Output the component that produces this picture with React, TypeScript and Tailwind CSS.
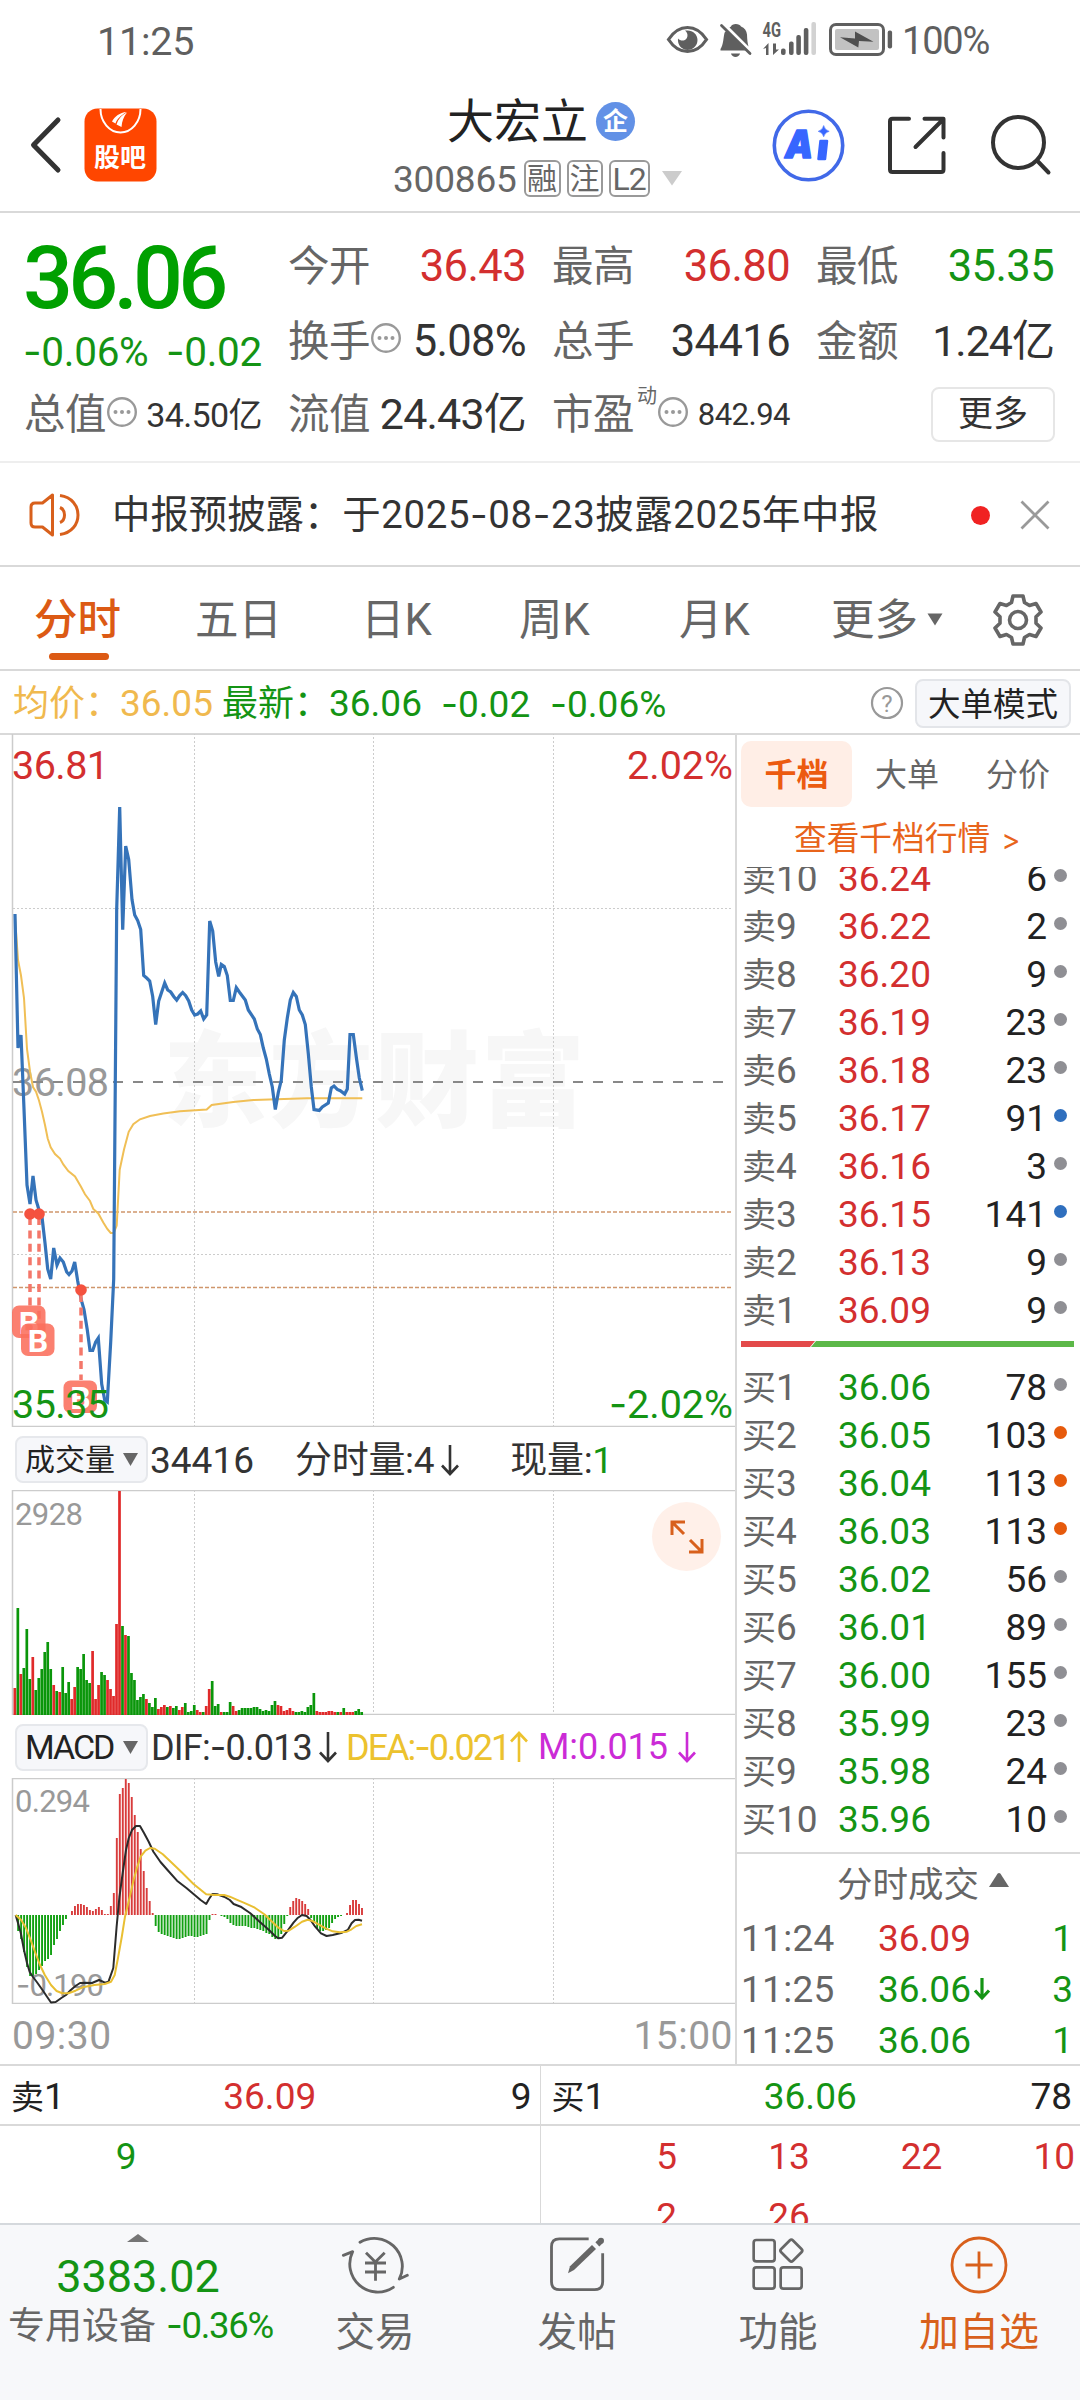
import { Fragment } from "react";
import clsx from "clsx";

const RED = "text-[#d32f2f]";
const GREEN = "text-[#149414]";

type Level = { label: string; price: string; qty: string; dot?: string };

const asks: Level[] = [
    { label: "卖10", price: "36.24", qty: "6" },
    { label: "卖9", price: "36.22", qty: "2" },
    { label: "卖8", price: "36.20", qty: "9" },
    { label: "卖7", price: "36.19", qty: "23" },
    { label: "卖6", price: "36.18", qty: "23" },
    { label: "卖5", price: "36.17", qty: "91", dot: "bg-[#2f6fbe]" },
    { label: "卖4", price: "36.16", qty: "3" },
    { label: "卖3", price: "36.15", qty: "141", dot: "bg-[#2f6fbe]" },
    { label: "卖2", price: "36.13", qty: "9" },
    { label: "卖1", price: "36.09", qty: "9" },
];

const bids: Level[] = [
    { label: "买1", price: "36.06", qty: "78" },
    { label: "买2", price: "36.05", qty: "103", dot: "bg-[#e65a0c]" },
    { label: "买3", price: "36.04", qty: "113", dot: "bg-[#e65a0c]" },
    { label: "买4", price: "36.03", qty: "113", dot: "bg-[#e65a0c]" },
    { label: "买5", price: "36.02", qty: "56" },
    { label: "买6", price: "36.01", qty: "89" },
    { label: "买7", price: "36.00", qty: "155" },
    { label: "买8", price: "35.99", qty: "23" },
    { label: "买9", price: "35.98", qty: "24" },
    { label: "买10", price: "35.96", qty: "10" },
    { label: "买11", price: "35.95", qty: "19" },
];

const trades = [
    { time: "11:24", price: "36.09", qty: "1", up: true, arrow: false },
    { time: "11:25", price: "36.06", qty: "3", up: false, arrow: true },
    { time: "11:25", price: "36.06", qty: "1", up: false, arrow: false },
];

// one bar per minute, bar height in px, r = up / g = down
const volume =
    "r27 g107 r41 g47 g86 g36 r58 g25 g37 g46 g63 g73 g46 r30 g24 r23 g48 g22 g33 r16 r28 g48 g46 g61 g35 g32 r64 r16 r30 g43 g40 r35 r26 r19 r91 r224 g89 r80 g79 g42 g35 g15 g18 g21 r16 g12 g8 g17 r6 r8 r10 g8 r9 g7 g9 r5 r8 g12 g3 g4 g10 r5 r3 g3 r9 r26 g34 g9 g11 r3 g3 g3 g13 r9 r4 g5 g7 g7 g7 g7 g8 g8 g6 g4 g5 g4 g10 g14 r10 r9 r4 r5 r7 r4 g3 g3 g4 g3 g8 g10 g22 r4 r3 r3 r3 r4 r4 r3 g3 r3 g7 r3 r3 r3 g4 g6 g3".split(
        " "
    );

const macd = [
    0, -16, -24, -37, -52, -61, -61, -59, -55, -51, -46, -44, -40, -30, -24, -16, -10, -4, 0, 4, 9, 11, 11, 10, 8, 5, 4,
    6, 8, 5, 1, 1, 9, 22, 77, 121, 127, 136, 132, 118, 100, 83, 66, 44, 27, 14, 2, -11, -17, -19, -20, -21, -22, -23,
    -24, -24, -23, -22, -21, -21, -22, -22, -21, -20, -19, -5, 1, 1, 0, -1, -2, -4, -8, -10, -11, -11, -11, -11, -12,
    -13, -13, -14, -15, -16, -18, -19, -22, -24, -23, -19, -9, -1, 8, 14, 17, 16, 14, 11, 6, -3, -8, -14, -16, -16,
    -15, -13, -8, -4, -2, -1, 0, 2, 10, 15, 15, 11, 7,
];

const priceLine =
    "15,914 18,1048 21,1035 24,1109 27,1185 30,1204 33,1176 36,1200 39,1210 42,1217 45,1243 47.7,1269 50.7,1279 53.7,1248 57,1265 60,1258 63.3,1262 66.7,1272 69,1274.6 72,1271 74.7,1262 77.7,1281 81,1299 84,1309.5 87.3,1330 90,1350.5 92.7,1350.5 95.7,1342 98.3,1338 101.7,1384 104.7,1400 107.3,1402 110.7,1342 113.7,1279 116.7,909 119.7,807 122.7,929.6 125.7,846 128.7,859.5 132,899.6 134.7,915 137.7,920.6 140.7,929.6 143.7,975.5 146.7,978 149.7,981 152.7,996.5 155.7,1024.6 158.7,1001 161.7,992 164.7,983 167.7,990 170.7,992 173.7,996.5 176.7,1000 179.7,995.6 182.7,992.5 185.7,995.6 188.7,1001 191.7,1010 194.7,1015 197.7,1014 200.7,1011 203.7,1019 206.7,1015 209.7,921 212.7,931 215.7,962 218.7,976.4 221.3,964.4 224.3,966.6 227.3,975.5 230.3,1000.5 233.3,1000.5 236.3,987.6 239.3,992 245.3,1000 248.3,1010 254.3,1019 257.3,1029 260.3,1034.5 263.3,1048 266.3,1059 269.3,1074 272.3,1087 275.3,1109.5 278.3,1092.5 281.3,1080 284.3,1040 287.3,1018 290.3,1000 293.3,992.5 296.3,996.5 299.3,1010 302.3,1015 305.3,1024.6 308.3,1053.7 311.3,1087 314,1109.5 319.3,1110.4 322.3,1107 328.3,1103 331.3,1088 334,1086 337.3,1089.4 340.3,1090.7 344.7,1094 347.3,1089 350,1034.5 353.3,1034.5 356.7,1060 359.3,1078 362.3,1090.7";

const avgLine =
    "15,917 18,960 21,975.5 24,998 27,1049 30,1071.5 33,1087 36,1091.6 39,1100.5 42,1111.7 45,1125 47.7,1138.5 50.7,1147.4 55,1154 60,1158.6 63.3,1164.4 68.3,1171 75,1176.4 81,1186.7 85,1194.3 90,1201 93.3,1209 98.3,1213.5 103.3,1222.4 107.3,1229 110.7,1233 113.7,1233 116.7,1225.5 119.7,1169.7 124,1149.6 128.7,1131.8 133.3,1124.2 140,1119.3 150,1116 163.3,1113.5 180,1111.3 206.7,1109.5 211.7,1105 233.3,1101.9 253.3,1100 306.7,1098.3 362.3,1098.3";

const difLine =
    "15.6,1915 18,1923 20.8,1933 24,1950 27,1963 29.7,1972 33,1977 36.8,1982 42.5,1990 47.2,1997 51,2002.5 55.7,2002 61.3,1998 66,1995 70.8,1990 75.5,1986 80,1983 85,1982.7 92,1983 99,1980 105,1982.7 108.5,1981.7 113.3,1968 116.6,1927 119.4,1897 122.7,1873 126,1850 128.8,1838 132,1830 136,1826 140,1826 144,1833 148.7,1841.7 153.4,1851.7 160.5,1862 167.5,1870 177,1880.7 186.4,1888 193.5,1894 200.6,1900 206.2,1904 209,1899 212.4,1894 217,1894.3 224,1896.7 229.8,1900 233.6,1904 240.7,1906.7 250,1913 259.6,1921.7 269,1930 275,1936 278.4,1938.3 282.2,1937.7 287,1931.7 293.5,1922.7 297.3,1918.3 302,1915 306.7,1916 310.5,1920 315.2,1926.7 321,1933.3 326.6,1936 332.7,1935 342,1932.7 347.8,1930 351.6,1923.3 355,1920 358.7,1919.7 362,1920.7";

const deaLine =
    "15.6,1915 21.2,1920 26,1928 30.7,1940 35.4,1953 40,1965 44.8,1975 51,1985 56.6,1991 62.3,1993.3 68.4,1993.3 75.5,1990.7 82.6,1987.3 94.4,1985 104.8,1984 111,1981.7 114.7,1975 118,1958 121.8,1936.7 125,1916.7 129.8,1896.7 133.6,1880 136.9,1868 140.6,1856.7 145.4,1850.7 150,1848 154.8,1848.7 162.8,1854.3 172.3,1863.3 181.7,1872.3 193.5,1884 206.2,1894.3 214.7,1895 224.2,1895 229.8,1896.7 236,1899.3 245.4,1903.3 254.8,1907.7 264.3,1914.3 273.7,1923.3 278.4,1927.7 284,1931 288.8,1930.7 295,1926.7 302,1921.7 307.7,1919.7 312.4,1921 318.5,1924.3 325.6,1928.3 332.7,1931.3 339.8,1932.3 346.9,1931.7 351.6,1929.3 356.3,1926 362,1924.3";

// Roboto's hyphen is too short for a minus sign, take it from Inter
function Num({ children, className }: { children: string; className?: string }) {
    const parts = children.split("-");
    return (
        <span className={clsx("whitespace-nowrap", className)}>
            {parts.map((p, i) => (
                <Fragment key={i}>
                    {i > 0 && <span className="font-['Inter']">-</span>}
                    {p}
                </Fragment>
            ))}
        </span>
    );
}

function MoreDots() {
    return (
        <svg className="relative -top-[3px] shrink-0" width="32" height="32" viewBox="0 0 32 32" fill="#999">
            <circle cx="16" cy="16" r="13.800" fill="none" stroke="#999" strokeWidth="2.400" />
            <circle cx="9.5" cy="16" r="2" />
            <circle cx="16" cy="16" r="2" />
            <circle cx="22.5" cy="16" r="2" />
        </svg>
    );
}

function Arrow({ up, className }: { up?: boolean; className?: string }) {
    return (
        <svg
            className={clsx("shrink-0", className)}
            width="20"
            height="32"
            viewBox="0 0 20 32"
            fill="none"
            stroke="currentColor"
            strokeWidth="2.6"
        >
            {up ? <path d="M10 31V2M2 10.5 10 2l8 8.5" /> : <path d="M10 1v29M2 21.5 10 30l8-8.5" />}
        </svg>
    );
}

function StatusBar() {
    return (
        <div className="flex h-[80px] items-center pl-[97px] text-[#5f5f5f]">
            <span className="w-[568px] pt-[3px] text-[39.5px] tracking-[-0.2px]">11:25</span>
            <svg width="230" height="40" viewBox="664 20 230 40" fill="#5f5f5f">
                <path
                    d="M667.5 39.5C673 31 679 27.5 686.500 27.500S700 31 705.500 39.500C700 48 694 51.500 686.500 51.500S673 48 667.500 39.500Z"
                    fill="none"
                    stroke="#5f5f5f"
                    strokeWidth="3.2"
                />
                <path d="M684 30.500c4 3 3 9-1.500 10-2 .4-4-.4-5.500-2-.8 6.500 4 11.500 9.500 11.500 5.600 0 10-4.500 10-10s-4.500-9.500-10-9.500z" />
                <path d="M730 26.500c.5-3.500 9-3.500 10 0 3.500 1.500 5.500 4 6 8 .2 5 .5 9 1.500 12L728.500 27.500zM726.500 31L744.500 50.500H719.500V49c3-4 3-13 4-16 .5-1.500 1.500-2 3-2z" />
                <path d="M720.500 25.500l28.500 28" fill="none" stroke="#5f5f5f" strokeWidth="2.800" strokeLinecap="round" />
                <path d="M730 53.500h9c-1 4.500-8 4.500-9 0z" />
                <text x="761.500" y="37" fontSize="20" fontWeight="700" textLength="18.500" lengthAdjust="spacingAndGlyphs">
                    4G
                </text>
                <path d="M762 49l5.500-6V55H765v-7zM772 43.500V55l6-5.500h-3V43.500z" />
                <rect x="780" y="48.500" width="4.600" height="6.500" rx="2" />
                <rect x="788" y="41.500" width="4.600" height="13.500" rx="2" />
                <rect x="795.300" y="35" width="4.600" height="20" rx="2" />
                <rect x="802.800" y="28" width="4.600" height="27" rx="2" />
                <rect x="810.400" y="22" width="4.600" height="33" rx="2" fill="#d2d2d2" />
                <rect x="829.500" y="24.500" width="53" height="30" rx="5.500" fill="none" stroke="#5f5f5f" strokeWidth="3" />
                <rect x="834" y="29" width="44" height="21" rx="2" fill="#c2c2c2" />
                <path d="M839 37.300l15 1.300V31.500l18.500 10.300-14.500-.8-.7 6.500z" fill="#4f4f4f" />
                <rect x="886.700" y="30.500" width="4.400" height="18" rx="2" />
            </svg>
            <span className="pt-[3px] pl-[7px] text-[38px] tracking-[-1.2px]">100%</span>
        </div>
    );
}

function Header() {
    return (
        <header className="flex h-[133px] items-center border-b-2 border-[#d9d9d9]">
            <svg className="ml-[27px]" width="40" height="60" viewBox="0 0 40 60" fill="none">
                <path d="M31 5 6.500 30 31 55" stroke="#333" strokeWidth="5" strokeLinecap="round" strokeLinejoin="round" />
            </svg>
            <svg className="ml-[17px]" width="73" height="74" viewBox="0 0 73 74">
                <rect x=".5" y=".5" width="72" height="73" rx="13" fill="#ff4600" />
                <path d="M16.500 1a20 23.500 0 0 0 40 0" fill="none" stroke="#fff" strokeWidth="2" />
                <path d="M28 13.500c2.500-5 8-9 14.500-9.500-6 3.500-9.500 7-11 11.500zM32.500 16.500c1.500-5 5-9.500 10.500-12-3.500 4.500-5 8.500-5.500 14.500z" fill="#fff" />
                <text x="36" y="58.500" fill="#fff" fontSize="26" fontWeight="700" textAnchor="middle">
                    股吧
                </text>
            </svg>
            <div className="flex w-[615px] flex-col">
                <div className="flex h-[66px] items-center pt-[2px] pl-[290px]">
                    <span className="text-[47px] text-[#222]">大宏立</span>
                    <span className="ml-2 flex size-[39px] items-center justify-center rounded-full bg-[#6291e6] text-[25px] font-bold text-white">
                        企
                    </span>
                </div>
                <div className="flex h-[50px] items-center gap-[6px] pt-px pl-[236px] text-[#666]">
                    <span className="mr-[1px] pt-[2px] text-[37px] tracking-[-0.2px]">300865</span>
                    <span className="flex h-[37px] w-[37px] items-center justify-center rounded-md border-2 border-[#999] text-[30px]">
                        融
                    </span>
                    <span className="flex h-[37px] w-[36px] items-center justify-center rounded-md border-2 border-[#999] text-[30px]">
                        注
                    </span>
                    <span className="flex h-[37px] w-[41px] items-center justify-center rounded-md border-2 border-[#999] text-[32px] tracking-[-1px]">
                        L2
                    </span>
                    <svg className="ml-[5px]" width="22" height="15" viewBox="0 0 22 15">
                        <path d="M1 0h20L11 14.500z" fill="#ccc" />
                    </svg>
                </div>
            </div>
            <svg width="280" height="76" viewBox="772 107 280 76" fill="none">
                <circle cx="808.500" cy="145.500" r="34.200" stroke="#4169e8" strokeWidth="3.600" />
                <g fill="#3766ff" stroke="#3766ff" strokeLinejoin="round">
                    <text
                        x="785"
                        y="158"
                        fontSize="39"
                        fontStyle="italic"
                        fontWeight="900"
                        fontFamily="Inter"
                        strokeWidth="1.500"
                        textLength="28"
                        lengthAdjust="spacingAndGlyphs"
                    >
                        A
                    </text>
                    <path d="M820.500 141h6.500l-2 18h-6.500z" strokeWidth="2.500" />
                    <path d="M823.700 125.500q1 4.500 5.500 5.800-4.500 1.300-5.500 5.500-1-4.200-5.500-5.500 4.500-1.300 5.500-5.800z" strokeWidth=".5" />
                </g>
                <g stroke="#333" strokeWidth="4" strokeLinecap="round" strokeLinejoin="round">
                    <path d="M909 118.700H892.500q-2.500 0-2.500 2.500V169.500q0 2.500 2.500 2.500H941q2.500 0 2.500-2.500V153" />
                    <path d="M924.500 118.700h19V137.500M943 119.500 915.500 147" />
                    <circle cx="1018.500" cy="142.500" r="25.500" />
                    <path d="M1037 160.500l11.500 12" />
                </g>
            </svg>
        </header>
    );
}

function Quote() {
    const label = "text-[41.5px] text-[#666] tracking-[-0.5px]";
    const value = "text-[43.5px] tracking-[-0.6px]";
    return (
        <section className="grid h-[250px] grid-cols-4 grid-rows-[75px_75px_72px] gap-x-[26px] border-b-2 border-[#eee] pt-[16px] pr-[26px] pl-[24px] text-[#333]">
            <div className="row-span-2 text-[#149414]">
                <div className="mt-[13px] -ml-px flex h-[73px] items-center text-[88px] font-medium tracking-[-4.8px] text-[#00a000]">
                    36.06
                </div>
                <div className="flex h-[74px] items-center justify-between text-[40.5px] tracking-[-0.3px]">
                    <Num className="-ml-px">-0.06%</Num>
                    <Num>-0.02</Num>
                </div>
            </div>
            <div className="flex items-center justify-between">
                <span className={label}>今开</span>
                <span className={clsx(value, RED)}>36.43</span>
            </div>
            <div className="flex items-center justify-between">
                <span className={label}>最高</span>
                <span className={clsx(value, RED)}>36.80</span>
            </div>
            <div className="flex items-center justify-between">
                <span className={label}>最低</span>
                <span className={clsx(value, GREEN)}>35.35</span>
            </div>
            <div className="flex items-center">
                <span className={label}>换手</span>
                <MoreDots />
                <span className="ml-auto text-[43.5px] tracking-[-0.7px]">5.08%</span>
            </div>
            <div className="flex items-center justify-between">
                <span className={label}>总手</span>
                <span className={value}>34416</span>
            </div>
            <div className="flex items-center justify-between">
                <span className={label}>金额</span>
                <span className="text-[43px] tracking-[-1px]">1.24亿</span>
            </div>
            <div className="flex items-center">
                <span className={label}>总值</span>
                <MoreDots />
                <span className="ml-auto text-[34px] tracking-[-0.6px]">34.50亿</span>
            </div>
            <div className="flex items-center justify-between">
                <span className={label}>流值</span>
                <span className="text-[43px] tracking-[-0.8px]">24.43亿</span>
            </div>
            <div className="flex items-center">
                <span className={label}>市盈</span>
                <span className="relative -top-[19px] ml-[3px] text-[20px] text-[#666]">动</span>
                <MoreDots />
                <span className="ml-auto text-[31px] tracking-[-0.5px]">842.94</span>
            </div>
            <div className="flex items-center justify-end">
                <span className="-mr-px flex h-[55px] w-[124px] items-center justify-center rounded-lg border-2 border-[#e6e6e6] text-[35px]">
                    更多
                </span>
            </div>
        </section>
    );
}

function News() {
    return (
        <div className="flex h-[105px] items-center border-b-2 border-[#d9d9d9] pt-[2px] text-[#333]">
            <svg className="ml-[29px]" width="52" height="46" viewBox="0 0 52 46" fill="none" stroke="#d8601c" strokeWidth="3">
                <path d="M23.500 3v40l-10-8H6q-4 0-4-4V15q0-4 4-4h7.500z" strokeLinejoin="round" />
                <path d="M31 15.500c6 2.500 6 12.500 0 15M31 3.500c24 3 24 36 0 39" />
            </svg>
            <span className="ml-[31px] text-[38.400px] whitespace-nowrap">
                中报预披露：<Num className="tracking-[0.600px]">于2025-08-23披露2025年中报</Num>
            </span>
            <span className="ml-auto size-[19px] rounded-full bg-[#f02222]" />
            <svg className="mr-[29px] ml-[29px]" width="32" height="32" viewBox="0 0 32 32">
                <path d="M2.500 2.500l27 27M29.500 2.500l-27 27" stroke="#999" strokeWidth="2.800" />
            </svg>
        </div>
    );
}

function Tabs() {
    return (
        <nav className="flex h-[104px] items-center border-b-2 border-[#d9d9d9] pt-[5px] text-[43.500px] text-[#666]">
            <div className="relative ml-[34px] w-[161px] font-medium text-[#dc5a14]">
                分时
                <span className="absolute -bottom-[17px] left-[15px] h-[7px] w-[60px] rounded-full bg-[#dc5a14]" />
            </div>
            <span className="w-[166px]">五日</span>
            <span className="w-[158px]">日K</span>
            <span className="w-[160px]">周K</span>
            <span className="w-[152px]">月K</span>
            <span>更多</span>
            <svg className="relative -top-px ml-[9px]" width="16" height="13" viewBox="0 0 16 13">
                <path d="M.5.5h15L8 12.500z" fill="#666" />
            </svg>
            <svg className="relative -top-px ml-[48px]" width="54" height="54" viewBox="0 0 54 54" fill="none" stroke="#666" strokeWidth="3.600" strokeLinejoin="round">
                <path d="M22 3h10l1.500 6.500 5 3 6.500-2 5 8.500-5 4.700v6.600l5 4.700-5 8.500-6.500-2-5 3L32 51H22l-1.500-6.500-5-3-6.500 2L4 35l5-4.700v-6.600L4 19l5-8.500 6.500 2 5-3z" />
                <circle cx="27" cy="27" r="8.500" />
            </svg>
        </nav>
    );
}

function InfoRow() {
    return (
        <div className="flex h-[64px] items-center border-b-2 border-[#d9d9d9] pt-[2px] pl-[13px] text-[37px] whitespace-nowrap">
            <span className="w-[209px] pt-px text-[#f0b94e]">
                <span className="inline-block w-[107px] text-[36px]">均价：</span>
                36.05
            </span>
            <span className="flex items-center pt-px text-[#149414]">
                <span className="w-[107px] shrink-0 text-[36px]">最新：</span>
                <span className="w-[112px]">36.06</span>
                <Num className="w-[109px]">-0.02</Num>
                <Num>-0.06%</Num>
            </span>
            <svg className="ml-auto" width="34" height="34" viewBox="0 0 34 34">
                <circle cx="17" cy="17" r="15" fill="none" stroke="#999" strokeWidth="2.200" />
                <text x="17" y="25.500" fill="#999" fontSize="24" textAnchor="middle">
                    ?
                </text>
            </svg>
            <span className="mr-[9px] ml-[11px] flex h-[49px] w-[156px] items-center justify-center rounded-lg border-2 border-[#e3e5e9] bg-[#f6f7fa] pt-[3px] text-[32.500px] text-[#222]">
                大单模式
            </span>
        </div>
    );
}

function Grid({ top, bottom }: { top: number; bottom: number }) {
    return (
        <g>
            <path
                d={[194.5, 373.5, 553.5].map((x) => `M${x} ${top}V${bottom}`).join("")}
                stroke="#ccc"
                strokeWidth="1"
                strokeDasharray="2 2"
            />
            <path d={`M735 ${top + 0.5}H12.500V${bottom - 0.5}H735`} fill="none" stroke="#ccc" strokeWidth="1.500" />
        </g>
    );
}

function BuyMark({ x, y }: { x: number; y: number }) {
    return (
        <g>
            <rect x={x} y={y} width="33.500" height="32.500" rx="7" fill="#fa6e5c" fillOpacity=".88" />
            <text x={x + 17} y={y + 28} fill="#fff" fontSize="32" fontWeight="700" textAnchor="middle">
                B
            </text>
        </g>
    );
}

function PriceChart() {
    return (
        <svg width="735" height="693" viewBox="0 734 735 693" fill="none">
            <text x="163" y="1119" fill="#f7f7f7" fontSize="104" fontWeight="900" textLength="422">
                东方财富
            </text>
            <path d="M13 908.500H733M13 1254.500H733" stroke="#ccc" strokeDasharray="2 2" />
            <Grid top={733} bottom={1427} />
            <text x="12" y="1096" fill="#999" fontSize="39.500" textLength="97">
                36.08
            </text>
            <path d="M13 1082H733" stroke="#888" strokeWidth="2" strokeDasharray="10 10" />
            <path d="M13 1212H733M13 1287.500H733" stroke="#cf966c" strokeWidth="1.600" strokeDasharray="4 2" />
            <polyline points={avgLine} stroke="#f0bf56" strokeWidth="2" />
            <polyline points={priceLine} stroke="#3573b9" strokeWidth="3.200" />
            <path d="M30 1217V1306M39 1217V1322M81 1294V1380" stroke="#f4776a" strokeWidth="3.500" strokeDasharray="8 5.400" />
            <g fill="#f4523f">
                <circle cx="30" cy="1214" r="5.800" />
                <circle cx="39" cy="1214" r="5.800" />
                <circle cx="81" cy="1290" r="5.800" />
            </g>
            <BuyMark x={12} y={1305.5} />
            <BuyMark x={21} y={1323.5} />
            <BuyMark x={63.5} y={1380.5} />
            <g fontSize="39.500">
                <text x="12" y="778.500" fill="#d32f2f" textLength="97">
                    36.81
                </text>
                <text x="12" y="1417.500" fill="#149414" textLength="97">
                    35.35
                </text>
                <text x="733" y="778.500" fill="#d32f2f" textAnchor="end">
                    2.02%
                </text>
                <text x="733" y="1417.500" fill="#149414" textAnchor="end">
                    <tspan fontFamily="Inter">-</tspan>2.02%
                </text>
            </g>
        </svg>
    );
}

function VolumeChart() {
    return (
        <div className="relative h-[225px]">
            <svg width="735" height="225" viewBox="0 1490 735 225">
                <Grid top={1490} bottom={1715} />
                {volume.map((v, i) => {
                    const h = Number(v.slice(1));
                    return (
                        <rect
                            key={i}
                            x={13.5 + i * 2.99}
                            y={1715 - h}
                            width="2.700"
                            height={h}
                            fill={v[0] === "r" ? "#e02a2a" : "#0a960a"}
                        />
                    );
                })}
                <text x="15" y="1524.500" fill="#999" fontSize="31" textLength="68">
                    2928
                </text>
            </svg>
            <span className="absolute top-[12px] left-[652px] flex size-[69px] items-center justify-center rounded-full bg-[#fff0e9]">
                <svg width="34" height="34" viewBox="0 0 34 34" fill="none" stroke="#d8601c" strokeWidth="3">
                    <path d="M2 15V2h13M2 2l12 12M32 19v13H19M32 32 20 20" />
                </svg>
            </span>
        </div>
    );
}

function MacdChart() {
    return (
        <svg width="735" height="226" viewBox="0 1778 735 226" fill="none">
            <Grid top={1778} bottom={2004} />
            {macd.map((v, i) => (
                <rect
                    key={i}
                    x={14.2 + i * 2.99}
                    y={v > 0 ? 1915 - v : 1915}
                    width="1.900"
                    height={Math.abs(v)}
                    fill={v > 0 ? "#d83c3c" : "#12a012"}
                />
            ))}
            <g fill="#999" fontSize="31">
                <text x="15" y="1811.500" textLength="75">
                    0.294
                </text>
                <text x="16" y="1996" textLength="88">
                    <tspan fontFamily="Inter">-</tspan>0.190
                </text>
            </g>
            <polyline points={difLine} stroke="#2b2b2b" strokeWidth="2" strokeLinejoin="round" />
            <polyline points={deaLine} stroke="#e9bf32" strokeWidth="2" strokeLinejoin="round" />
        </svg>
    );
}

function Picker({ children, className }: { children: string; className: string }) {
    return (
        <span className="ml-[15px] flex h-[47px] w-[133px] shrink-0 items-center justify-between rounded-lg border-2 border-[#e6e8ec] bg-[#f6f7fa] px-[8px] text-[#222]">
            <span className={className}>{children}</span>
            <svg width="15" height="13" viewBox="0 0 15 13">
                <path d="M0 0h15L7.500 13z" fill="#666" />
            </svg>
        </span>
    );
}

function Charts() {
    return (
        <div className="flex h-[1330px] w-[735px] flex-col">
            <PriceChart />
            <div className="flex h-[63px] items-center pt-[2px] text-[37px] whitespace-nowrap text-[#333]">
                <Picker className="text-[30px]">成交量</Picker>
                <span className="w-[147px] pt-px pl-[2px]">34416</span>
                <span className="pt-px tracking-[-0.3px]">分时量:4</span>
                <Arrow className="ml-[6px]" />
                <span className="ml-[50px] pt-px tracking-[-0.3px]">
                    现量:<span className={GREEN}>1</span>
                </span>
            </div>
            <VolumeChart />
            <div className="flex h-[63px] items-center pt-px text-[36px] whitespace-nowrap text-[#333]">
                <Picker className="text-[34px] tracking-[-2px]">MACD</Picker>
                <Num className="ml-[3px] w-[167px] tracking-[-0.8px]">DIF:-0.013</Num>
                <Arrow />
                <span className="ml-[8px] flex items-center text-[#ecc22e]">
                    <Num className="w-[163px] tracking-[-2px]">DEA:-0.021</Num>
                    <Arrow up />
                </span>
                <span className="ml-[9px] flex items-center text-[#cb2bd6]">
                    <Num className="w-[139px] tracking-[-0.1px]">M:0.015</Num>
                    <Arrow />
                </span>
            </div>
            <MacdChart />
            <div className="flex h-[60px] items-center justify-between pt-[4px] pr-[2px] pl-[12px] text-[39px] tracking-[0.500px] text-[#999]">
                <span>09:30</span>
                <span>15:00</span>
            </div>
        </div>
    );
}

function LevelRow({ level, color }: { level: Level; color: string }) {
    return (
        <div className="flex h-[48px] shrink-0 items-center pl-[5px] text-[37px]">
            <span className="w-[96px] whitespace-nowrap text-[#666]">
                <span className="text-[34px]">{level.label[0]}</span>
                {level.label.slice(1)}
            </span>
            <span className={clsx("w-[96px]", color)}>{level.price}</span>
            <span className="w-[113px] text-right text-[#222]">{level.qty}</span>
            <span className={clsx("relative -top-[3px] ml-[7px] size-[13px] rounded-full", level.dot ?? "bg-[#8f8f94]")} />
        </div>
    );
}

function OrderBook() {
    return (
        <aside className="flex h-[1330px] w-[345px] flex-col border-l-2 border-[#d9d9d9]">
            <div className="mt-[7px] ml-[4px] flex h-[66px] shrink-0 items-center text-[32px] text-[#666]">
                <span className="flex h-full w-[111px] items-center justify-center rounded-[10px] bg-[#ffeee6] pt-[2px] font-bold text-[#ec5b10]">
                    千档
                </span>
                <span className="w-[110px] pt-[2px] pl-[23px]">大单</span>
                <span className="pt-[2px] pl-[24px]">分价</span>
            </div>
            <div className="flex h-[60px] shrink-0 items-center pt-[4px] pl-[57px] text-[32.700px] whitespace-nowrap text-[#e8641b]">
                查看千档行情<span className="pl-[11px] font-['Inter'] text-[29px]">&gt;</span>
            </div>
            <div className="flex h-[474px] shrink-0 flex-col justify-end overflow-hidden pb-[7px]">
                {asks.map((l) => (
                    <LevelRow key={l.label} level={l} color={RED} />
                ))}
            </div>
            <svg className="ml-[4px] shrink-0" width="333" height="6" viewBox="0 0 333 6">
                <path d="M0 0H74L69 6H0z" fill="#e34a4a" />
                <path d="M75 0H333V6H70z" fill="#5cb848" />
            </svg>
            <div className="h-[507px] shrink-0 overflow-hidden border-b-2 border-[#d9d9d9] pt-[16px]">
                {bids.map((l) => (
                    <LevelRow key={l.label} level={l} color={GREEN} />
                ))}
            </div>
            <div className="flex h-[58px] shrink-0 items-center pt-[4px] pl-[100px] text-[35.500px] text-[#666]">
                分时成交
                <svg className="relative -top-[5px] ml-[10px]" width="20" height="14" viewBox="0 0 20 14">
                    <path d="M0 14h20L11.500.8q-1.500-1.500-3 0z" fill="#666" />
                </svg>
            </div>
            {trades.map((t, i) => (
                <div key={i} className="flex h-[51px] shrink-0 items-center pt-px pr-[7px] pl-[4px] text-[37px] text-[#666]">
                    <span className="w-[137px] tracking-[0.300px]">{t.time}</span>
                    <span className={t.up ? RED : GREEN}>{t.price}</span>
                    {t.arrow && (
                        <svg className="ml-[2px]" width="18" height="24" viewBox="0 0 18 24" fill="none" stroke="#149414" strokeWidth="3.200">
                            <path d="M9 1v20M2 13.500l7 7.500 7-7.500" />
                        </svg>
                    )}
                    <span className={clsx("ml-auto", GREEN)}>{t.qty}</span>
                </div>
            ))}
        </aside>
    );
}

function QueueSide({ side, price, color, qty, queue, queueColor }: {
    side: string;
    price: string;
    color: string;
    qty: string;
    queue: string[];
    queueColor: string;
}) {
    return (
        <div className="flex-1">
            <div className="grid h-[60px] grid-cols-3 items-center border-b-2 border-[#d9d9d9] pt-[2px] pr-[8px] pl-[11px] text-[37px] text-[#222]">
                <span>
                    <span className="text-[33px]">{side}</span>1
                </span>
                <span className={clsx("-ml-[3px] text-center", color)}>{price}</span>
                <span className="text-right">{qty}</span>
            </div>
            <div className={clsx("grid grid-cols-4 pt-px pr-[5px] pl-[4px] text-right text-[37px] leading-[60px]", queueColor)}>
                {queue.map((q, i) => (
                    <span key={i}>{q}</span>
                ))}
            </div>
        </div>
    );
}

function BottomBar() {
    return (
        <footer className="flex h-[177px] border-t-2 border-[#d5d9dd] bg-[#f7f8fa] text-[#666]">
            <div className="flex w-[290px] flex-col">
                <svg className="mt-[9px] ml-[127px]" width="22" height="8" viewBox="0 0 22 8">
                    <path d="M0 8h22L11 0z" fill="#757575" />
                </svg>
                <span className="flex h-[68px] items-center justify-center pt-px pr-[14px] text-[45px] text-[#149414]">3383.02</span>
                <span className="flex h-[32px] items-center pl-[8px] text-[37px] whitespace-nowrap">
                    专用设备
                    <Num className="ml-[10px] text-[36.500px] tracking-[-1.300px] text-[#149414]">-0.36%</Num>
                </span>
            </div>
            <div className="flex w-[170px] flex-col items-center pt-[9px] text-[39.500px]">
                <svg width="68" height="60" viewBox="33 22 204 180" fill="none" stroke="#666" strokeWidth="8.500" strokeLinecap="round">
                    <path d="M90 47A84 84 0 0 1 208 157l24-11M190 182A84 84 0 0 1 68 75l-28 11" strokeLinejoin="round" />
                    <path d="M108 78l28 28 28-28M105 109h63M105 136h63M136.500 106v56" strokeLinecap="butt" />
                </svg>
                <span className="mt-[19px]">交易</span>
            </div>
            <div className="ml-[32px] flex w-[170px] flex-col items-center pt-[9px] text-[39.500px]">
                <svg width="60" height="60" viewBox="651 26 180 180" fill="none" stroke="#666" strokeWidth="8.500">
                    <path d="M776 40.500H688q-23.500 0-23.500 23.500V169q0 24 23.500 24H794q24 0 24-24V84" />
                    <path d="M714 144l6-21 66-64 12 12-66 63z" fill="#666" stroke="none" />
                    <path d="M802 57l12-11.500" strokeWidth="17" />
                    <circle cx="813" cy="46" r="9" fill="#666" stroke="none" />
                </svg>
                <span className="mt-[19px]">发帖</span>
            </div>
            <div className="ml-[31px] flex w-[170px] flex-col items-center pt-[9px] text-[39.500px]">
                <svg width="60" height="60" viewBox="1255 26 180 180" fill="none" stroke="#666" strokeWidth="8">
                    <rect x="1272" y="44" width="63" height="64" rx="8" />
                    <rect x="1272" y="126" width="63" height="64" rx="8" />
                    <rect x="1353" y="126" width="63" height="64" rx="8" />
                    <rect x="1360" y="51" width="50" height="50" rx="7" transform="rotate(45 1385 76)" />
                </svg>
                <span className="mt-[19px]">功能</span>
            </div>
            <div className="ml-[31px] flex w-[170px] flex-col items-center pt-[9px] text-[40px] text-[#d8601c]">
                <svg width="60" height="60" viewBox="0 0 60 60" fill="none" stroke="#d8601c" strokeWidth="2.800">
                    <circle cx="30" cy="31" r="27" />
                    <path d="M16.500 31h27M30 17.500v27" />
                </svg>
                <span className="mt-[19px]">加自选</span>
            </div>
        </footer>
    );
}

export default function App() {
    return (
        <div className="flex h-[2400px] w-[1080px] flex-col overflow-hidden bg-white font-['Roboto','Noto_Sans_CJK_SC',sans-serif] leading-none">
            <StatusBar />
            <Header />
            <Quote />
            <News />
            <Tabs />
            <InfoRow />
            <div className="-mt-px flex h-[1330px]">
                <Charts />
                <OrderBook />
            </div>
            <div className="flex h-[159px] overflow-hidden border-t-2 border-[#d9d9d9]">
                <QueueSide side="卖" price="36.09" color={RED} qty="9" queue={["9"]} queueColor={GREEN} />
                <div className="w-px bg-[#d9d9d9]" />
                <QueueSide
                    side="买"
                    price="36.06"
                    color={GREEN}
                    qty="78"
                    queue={["5", "13", "22", "10", "2", "26"]}
                    queueColor={RED}
                />
            </div>
            <BottomBar />
        </div>
    );
}
